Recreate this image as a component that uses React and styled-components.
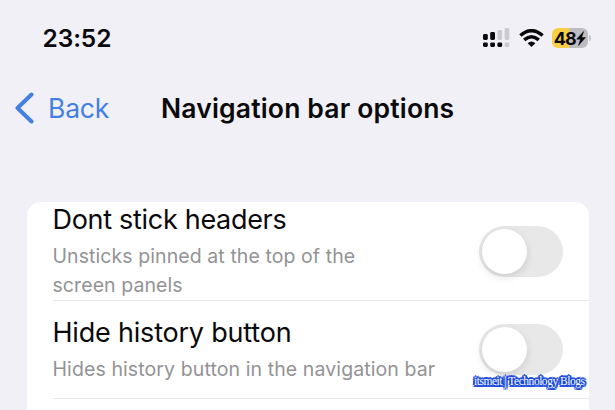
import React from "react";
import styled, { createGlobalStyle } from "styled-components";

const GlobalStyle = createGlobalStyle`
  * { box-sizing: border-box; }
  body { margin: 0; background: #f1f0f6; }
`;

const Screen = styled.div`
  position: relative;
  width: 615px;
  height: 410px;
  overflow: hidden;
  background: #f1f0f6;
  color: #0a0a0c;
  font-family: Inter, "Liberation Sans", sans-serif;
  white-space: nowrap;
`;

const StatusBar = styled.header`
  display: flex;
  align-items: center;
  justify-content: space-between;
  height: 76px;
  padding: 0 24px 0 42.5px;
`;

const Clock = styled.time`
  font-size: 24.5px;
  font-weight: 600;
  letter-spacing: -0.1px;
`;

const StatusIcons = styled.div`
  display: flex;
  align-items: center;
  gap: 9px;
`;

const Battery = styled.div`
  display: flex;
  align-items: center;
  gap: 1px;
  margin-left: -1px;
`;

const BatteryBody = styled.div`
  display: flex;
  align-items: center;
  justify-content: center;
  width: 36.5px;
  height: 20px;
  border-radius: 6px;
  background: linear-gradient(90deg, #f8cf47 0 46%, #bdbdc1 50%);
  font-size: 18px;
  font-weight: 700;
  letter-spacing: -1px;
`;

const BatteryTip = styled.div`
  width: 2px;
  height: 6px;
  border-radius: 0 2px 2px 0;
  background: #c7c7cb;
`;

const NavBar = styled.nav`
  display: grid;
  grid-template-columns: 147px 1fr;
  align-items: center;
  height: 64px;
  padding-left: 14px;
`;

const BackLink = styled.a`
  display: flex;
  align-items: center;
  gap: 13px;
  color: #4380e2;
  font-size: 26.5px;
  letter-spacing: -0.2px;
`;

const Title = styled.h1`
  margin: 0;
  font-size: 26.5px;
  font-weight: 600;
  letter-spacing: ${(p) => p.$tracking}px;
`;

const Card = styled.main`
  width: 562px;
  height: 240px;
  margin: 62px 0 0 26.5px;
  border-radius: 14px 14px 0 0;
  background: #fff;
`;

const Row = styled.section`
  display: flex;
  justify-content: space-between;
  height: ${(p) => p.$height}px;
  margin-left: 26px;
  padding-top: ${(p) => p.$top}px;
  border-bottom: 1.5px solid #e7e7e9;
`;

const RowTitle = styled.h2`
  margin: 0 0 5px;
  font-size: 27px;
  font-weight: 400;
  line-height: 34px;
  letter-spacing: ${(p) => p.$tracking}px;
`;

const Description = styled.p`
  margin: 0;
  color: #939395;
  font-size: 19.5px;
  line-height: 29px;
  letter-spacing: ${(p) => p.$tracking}px;
`;

const Switch = styled.div`
  width: 84px;
  height: 51px;
  margin: ${(p) => p.$offset}px 26px 0 0;
  padding: 3px;
  border-radius: 26px;
  background: #e8e8e9;
`;

const Knob = styled.div`
  width: 45px;
  height: 45px;
  border-radius: 50%;
  background: #fff;
  box-shadow: 0 3px 8px rgba(0, 0, 0, 0.12);
`;

const Watermark = styled.div`
  position: absolute;
  left: 474px;
  top: 373px;
  color: #fff;
  font: 11.5px/17px "Liberation Serif", serif;
  letter-spacing: ${(p) => p.$tracking}px;
  text-shadow:
    2px 0 #1648dc, -2px 0 #1648dc, 0 2px #1648dc, 0 -2px #1648dc,
    1.5px 1.5px #1648dc, -1.5px 1.5px #1648dc, 1.5px -1.5px #1648dc, -1.5px -1.5px #1648dc,
    1px 0 #1648dc, -1px 0 #1648dc, 0 1px #1648dc, 0 -1px #1648dc;
`;

const Signal = () => (
  <svg width="27" height="20" viewBox="0 0 27 20">
    <g fill="#09090b">
      <rect x="0" y="6" width="4.8" height="6" rx="1.4" />
      <rect x="7.2" y="4" width="4.8" height="8" rx="1.4" />
      <rect x="0" y="14.4" width="4.8" height="4.6" rx="1.4" />
      <rect x="7.2" y="14.4" width="4.8" height="4.6" rx="1.4" />
      <rect x="14.4" y="14.4" width="4.8" height="4.6" rx="1.4" />
    </g>
    <g fill="#cbcbcf">
      <rect x="14.4" y="2" width="4.8" height="10" rx="1.4" />
      <rect x="21.6" y="0" width="4.8" height="12" rx="1.4" />
      <rect x="21.6" y="14.4" width="4.8" height="4.6" rx="1.4" />
    </g>
  </svg>
);

const Wifi = () => (
  <svg width="25" height="18" viewBox="0 0 25 18" fill="none" stroke="#09090b" strokeWidth="3.5">
    <path d="M1.4 6.5 Q12.5 -3.1 23.6 6.5" />
    <path d="M5.2 10.9 Q12.5 4.5 19.8 10.9" />
    <path d="M12.5 18 8.6 14.2 Q12.5 10.8 16.4 14.2Z" fill="#09090b" stroke="none" />
  </svg>
);

const Bolt = () => (
  <svg width="10" height="15" viewBox="0 0 10 15">
    <path d="M7.6 0.5 0.7 8.2H4.5L2.5 14.5 9.5 6.6H5.6Z" fill="#09090b" stroke="#09090b" strokeWidth="0.5" />
  </svg>
);

const Chevron = () => (
  <svg width="21" height="32" viewBox="0 0 21 32">
    <path d="M17.5 2.5 3.5 16 17.5 29.5" fill="none" stroke="#4380e2" strokeWidth="4" strokeLinecap="round" strokeLinejoin="round" />
  </svg>
);

const Toggle = ({ offset }) => (
  <Switch role="switch" aria-checked="false" $offset={offset}>
    <Knob />
  </Switch>
);

export default function App() {
  return (
    <Screen>
      <GlobalStyle />
      <StatusBar>
        <Clock>23:52</Clock>
        <StatusIcons>
          <Signal />
          <Wifi />
          <Battery>
            <BatteryBody>48<Bolt /></BatteryBody>
            <BatteryTip />
          </Battery>
        </StatusIcons>
      </StatusBar>
      <NavBar>
        <BackLink><Chevron />Back</BackLink>
        <Title $tracking={0.17}>Navigation bar options</Title>
      </NavBar>
      <Card>
        <Row $height={98.5} $top={1}>
          <div>
            <RowTitle $tracking={-0.3}>Dont stick headers</RowTitle>
            <Description $tracking={0.08}>Unsticks pinned at the top of the<br />screen panels</Description>
          </div>
          <Toggle offset={23} />
        </Row>
        <Row $height={98.5} $top={15.5}>
          <div>
            <RowTitle $tracking={-0.2}>Hide history button</RowTitle>
            <Description $tracking={0.1}>Hides history button in the navigation bar</Description>
          </div>
          <Toggle offset={8} />
        </Row>
      </Card>
      <Watermark $tracking={-0.48}>itsmeit | Technology Blogs</Watermark>
    </Screen>
  );
}
